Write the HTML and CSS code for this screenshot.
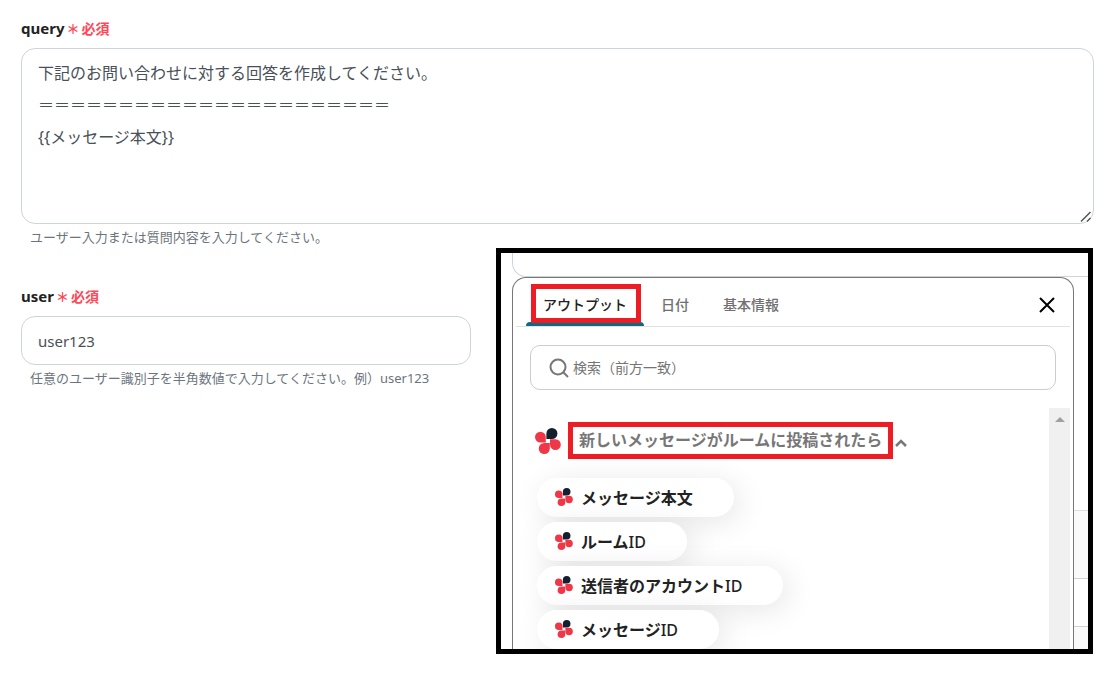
FILE: index.html
```
<!DOCTYPE html>
<html lang="ja">
<head>
    <meta charset="UTF-8">
    <meta name="viewport" content="width=device-width, initial-scale=1.0">
    <title>query</title>
    <link rel="stylesheet" href="styles.css">
</head>
<body>
    <!-- Shared logo mark -->
    <svg class="defs" width="0" height="0" aria-hidden="true">
        <symbol id="mark" viewBox="0 0 26 26">
            <path class="petal" d="M5.4 3.7a5.4 5.4 0 0 1 5.4 5.4V14.5H5.4a5.4 5.4 0 0 1 0-10.8Z" />
            <path class="petal-dark" d="M11.4 5.5a5.5 5.5 0 1 1 5.5 5.5H11.4Z" />
            <path class="petal" d="M15 11.2H20.5a5.4 5.4 0 1 1-5.5 5.5Z" />
            <path class="petal" d="M14.8 15V20.5a5.5 5.5 0 1 1-5.5-5.5Z" />
        </symbol>
    </svg>

    <main class="page">
        <!-- Query -->
        <div class="field">
            <label class="label" for="query">query<span class="required"><span class="star">＊</span>必須</span></label>
            <textarea class="box box-area" id="query">下記のお問い合わせに対する回答を作成してください。
＝＝＝＝＝＝＝＝＝＝＝＝＝＝＝＝＝＝＝＝＝＝
{{メッセージ本文}}</textarea>
            <p class="help">ユーザー入力または質問内容を入力してください。</p>
        </div>

        <div class="row">
            <!-- User -->
            <div class="field field-user">
                <label class="label" for="user">user<span class="required"><span class="star">＊</span>必須</span></label>
                <input class="box box-input" id="user" type="text" value="user123">
                <p class="help">任意のユーザー識別子を半角数値で入力してください。例）user123</p>
            </div>

            <!-- Output picker -->
            <section class="inset">
                <div class="inset-top"></div>
                <div class="inset-body">
                    <div class="panel">
                        <div class="tabs">
                            <button class="tab active marked">アウトプット</button>
                            <button class="tab">日付</button>
                            <button class="tab">基本情報</button>
                            <button class="close" aria-label="閉じる">
                                <svg width="18" height="18" viewBox="0 0 18 18"><path d="M2 2L16 16M16 2L2 16" /></svg>
                            </button>
                        </div>
                        <div class="search">
                            <svg width="20" height="20" viewBox="0 0 20 20"><circle cx="9" cy="9" r="7.5" /><path d="M14 14L19 19" /></svg>
                            <input type="text" aria-label="検索" placeholder="検索（前方一致）">
                        </div>
                        <div class="scroll">
                            <div class="list">
                                <button class="group">
                                    <svg width="26" height="26"><use href="#mark" /></svg>
                                    <span class="group-name">新しいメッセージがルームに投稿されたら</span>
                                    <svg class="caret" width="14" height="10" viewBox="0 0 14 10"><path d="M2 8L7 3L12 8" /></svg>
                                </button>
                                <button class="chip"><svg width="18" height="18"><use href="#mark" /></svg><span>メッセージ本文</span></button>
                                <button class="chip"><svg width="18" height="18"><use href="#mark" /></svg><span>ルーム<span class="latin">ID</span></span></button>
                                <button class="chip"><svg width="18" height="18"><use href="#mark" /></svg><span>送信者のアカウント<span class="latin">ID</span></span></button>
                                <button class="chip"><svg width="18" height="18"><use href="#mark" /></svg><span>メッセージ<span class="latin">ID</span></span></button>
                            </div>
                            <div class="bar">
                                <svg width="10" height="6" viewBox="0 0 10 6"><path d="M5 0L10 5H0Z" /></svg>
                            </div>
                        </div>
                    </div>
                    <div class="behind">
                        <div class="behind-a"></div>
                        <div class="behind-b"></div>
                        <div class="behind-c"></div>
                        <div class="behind-d"></div>
                    </div>
                </div>
            </section>
        </div>
    </main>
</body>
</html>
```
FILE: styles.css
```
* {
    box-sizing: border-box;
}
body {
    margin: 0;
    background: #fff;
    color: #222;
    font-family: "Noto Sans", "Noto Sans CJK JP", sans-serif;
}
button, input, textarea {
    font-family: inherit;
}
button {
    border: none;
    background: none;
    padding: 0;
    cursor: pointer;
}
p {
    margin: 0;
}
svg {
    display: block;
    flex: none;
}
.defs {
    position: absolute;
}
.petal { fill: #f03748; }
.petal-dark { fill: #132030; }

.page {
    padding: 16px 21px;
}
.row {
    display: flex;
    gap: 25px;
    margin-right: 1px;
}

/* Form fields */
.field {
    display: flex;
    flex-direction: column;
}
.field-user {
    flex: 0 0 450px;
    padding-top: 36px;
}
.label {
    display: flex;
    align-items: center;
    height: 24px;
    margin-bottom: 8px;
    gap: 2px;
    font-size: 15px;
    font-weight: bold;
}
.required {
    display: flex;
    align-items: center;
    gap: 2px;
    color: #ff4757;
    font-size: 14px;
}
.star {
    font-size: 13px;
}
.box {
    width: 100%;
    border: 1px solid #ced4da;
    border-radius: 14px;
    background: #fff;
    color: #495057;
    outline: none;
}
.box-area {
    display: block;
    height: 176px;
    padding: 8px 16px;
    font-size: 16px;
    line-height: 32px;
    resize: vertical;
}
.box-area::-webkit-resizer {
    background: url("data:image/svg+xml,%3Csvg xmlns='http://www.w3.org/2000/svg' width='15' height='15'%3E%3Cpath d='M3 13.5L12.5 4M9 13.5L12.5 10' stroke='%23555' stroke-width='1.5'/%3E%3C/svg%3E") no-repeat right bottom;
}
.box-input {
    height: 49px;
    padding: 0 16px;
    font-size: 15px;
}
.help {
    padding: 2px 9px 0;
    color: #6c757d;
    font-size: 13px;
    line-height: 22px;
}

/* Output picker */
.inset {
    display: flex;
    flex-direction: column;
    flex: 1;
    min-width: 0;
    height: 406px;
    border: 5px solid #000;
    overflow: hidden;
}
.inset-top {
    flex: none;
    height: 24px;
    margin-left: 11px;
    border: solid #ced4da;
    border-width: 0 0 1px 1px;
    border-bottom-left-radius: 14px;
}
.inset-body {
    display: flex;
    flex: 1;
    min-height: 0;
    padding-left: 11px;
}
.panel {
    display: flex;
    flex-direction: column;
    flex: 1;
    min-width: 0;
    padding: 0 3px;
    border: 1px solid #777;
    border-bottom: none;
    border-radius: 14px 14px 0 0;
}
.tabs {
    display: flex;
    flex: none;
    height: 49px;
    padding: 0 14px 0 10px;
    border-bottom: 1px solid #e2e2e2;
}
.tab {
    position: relative;
    padding: 4px 17px 0;
    color: #707070;
    font-size: 14px;
    font-weight: 500;
}
.tab.active {
    color: #222;
}
.tab.active::after {
    content: "";
    position: absolute;
    left: 0;
    right: 0;
    bottom: 0;
    height: 4px;
    border-radius: 4px 4px 0 0;
    background: #0b6a84;
}
.marked::before {
    content: "";
    position: absolute;
    z-index: 1;
    inset: 6px 3px 3px 5px;
    border: 5px solid #ee1c25;
}
.close {
    margin-left: auto;
    padding-top: 6px;
}
.close path {
    fill: none;
    stroke: #000;
    stroke-width: 2;
}
.search {
    display: flex;
    flex: none;
    align-items: center;
    gap: 4px;
    height: 45px;
    margin: 18px 14px;
    padding: 0 18px;
    border: 1px solid #ccc;
    border-radius: 10px;
}
.search svg {
    fill: none;
    stroke: #777;
    stroke-width: 2;
}
.search input {
    flex: 1;
    min-width: 0;
    padding: 0;
    border: none;
    outline: none;
    font-size: 14px;
}
.search input::placeholder {
    color: #757575;
}

.scroll {
    display: flex;
    flex: 1;
    min-height: 0;
}
.list {
    display: flex;
    flex-direction: column;
    flex: 1;
    align-items: flex-start;
    gap: 5px;
    min-width: 0;
    padding: 14px 0 0 21px;
    overflow: hidden;
}
.group {
    display: flex;
    flex: none;
    align-items: center;
    margin: 0 0 14px -2px;
    color: #777;
    font-size: 16px;
    font-weight: bold;
}
.group-name {
    margin-left: 7px;
    padding: 0 6px;
    border: 5px solid #ee1c25;
    line-height: 27px;
}
.caret {
    margin: 4px 0 0 1px;
}
.caret path {
    fill: none;
    stroke: #777;
    stroke-width: 2.5;
}
.chip {
    display: flex;
    flex: none;
    align-items: center;
    gap: 8px;
    height: 39px;
    padding: 0 41px 2px 18px;
    border-radius: 20px;
    background: #fff;
    box-shadow: 5px 5px 30px rgba(0, 0, 0, 0.1);
    color: #222;
    font-size: 16px;
    font-weight: bold;
}
.latin {
    font-weight: 500;
}
.bar {
    display: flex;
    flex: none;
    justify-content: center;
    width: 21px;
    padding-top: 9px;
    background: #f0f0f0;
}
.bar path {
    fill: #a0a0a0;
}

/* Page edge seen to the right of the panel */
.behind {
    display: flex;
    flex: none;
    flex-direction: column;
    width: 14px;
}
.behind-a {
    height: 233px;
}
.behind-b {
    height: 68px;
    border-top: 1px solid #ddd;
    background: #fafafa;
}
.behind-c {
    height: 48px;
    border-top: 1px solid #ced4da;
}
.behind-d {
    flex: 1;
    border-top: 1px solid #ced4da;
    background: #fafafa;
}
```
